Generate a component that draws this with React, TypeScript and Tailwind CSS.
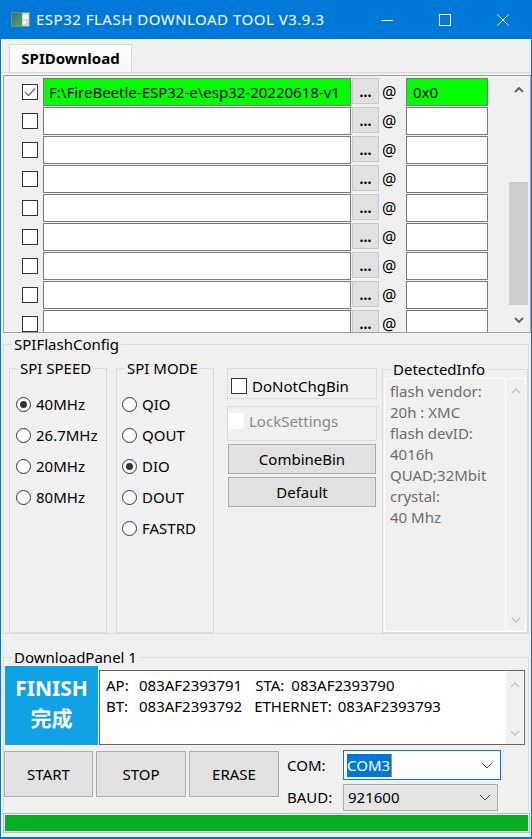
import React from "react";

type ChevronProps = { up?: boolean; color: string; w?: number; h?: number; sw?: number };

function Chevron({ up = false, color, w = 10, h = 6, sw = 1.5 }: ChevronProps) {
  const d = up ? `M1 ${h - 1} L${w / 2} 1 L${w - 1} ${h - 1}` : `M1 1 L${w / 2} ${h - 1} L${w - 1} 1`;
  return (
    <svg width={w} height={h} viewBox={`0 0 ${w} ${h}`} fill="none">
      <path d={d} stroke={color} strokeWidth={sw} />
    </svg>
  );
}

function AppIcon() {
  return (
    <svg width="19" height="15" viewBox="0 0 19 15">
      <defs>
        <linearGradient id="ic" x1="0" y1="0" x2="1" y2="1">
          <stop offset="0" stopColor="#2c6f86" />
          <stop offset="1" stopColor="#52ad4f" />
        </linearGradient>
      </defs>
      <rect x="0.5" y="0.5" width="18" height="14" fill="#d3d9d9" stroke="#7d8a8a" />
      <rect x="1" y="1" width="10" height="13" fill="url(#ic)" />
      <rect x="12" y="3" width="5" height="4" fill="#ffffff" />
      <rect x="12" y="9" width="3" height="3" fill="#ffffff" />
    </svg>
  );
}

function TitleBar() {
  return (
    <div className="flex h-[39px] shrink-0 items-center bg-[#0078d7] text-white">
      <div className="ml-[11px] flex">
        <AppIcon />
      </div>
      <span className="ml-[6px] text-[15px] leading-none tracking-[0.5px]">ESP32 FLASH DOWNLOAD TOOL V3.9.3</span>
      <div className="ml-auto flex h-full">
        <div className="flex w-[58px] items-center justify-center">
          <svg width="12" height="12" viewBox="0 0 12 12">
            <path d="M0 6.5 H12" stroke="#fff" strokeWidth="1" />
          </svg>
        </div>
        <div className="flex w-[58px] items-center justify-center">
          <svg width="12" height="12" viewBox="0 0 12 12">
            <rect x="0.5" y="0.5" width="11" height="11" fill="none" stroke="#fff" strokeWidth="1" />
          </svg>
        </div>
        <div className="flex w-[58px] items-center justify-center">
          <svg width="12" height="12" viewBox="0 0 12 12">
            <path d="M0.5 0.5 L11.5 11.5 M11.5 0.5 L0.5 11.5" stroke="#fff" strokeWidth="1" />
          </svg>
        </div>
      </div>
    </div>
  );
}

function Check({ checked = false, faded = false }: { checked?: boolean; faded?: boolean }) {
  return (
    <span
      className={
        faded
          ? "flex h-[16px] w-[16px] shrink-0 items-center justify-center bg-white"
          : "flex h-[16px] w-[16px] shrink-0 items-center justify-center border border-[#333333] bg-white"
      }
    >
      {checked && (
        <svg width="12" height="10" viewBox="0 0 12 10" fill="none">
          <path d="M1 5 L4.5 8.5 L11 1.5" stroke="#6d6d6d" strokeWidth="1.3" />
        </svg>
      )}
    </span>
  );
}

function Radio({ label, checked = false }: { label: string; checked?: boolean }) {
  return (
    <div className="flex h-[31px] items-center gap-[5px]">
      <span className="flex h-[15px] w-[15px] shrink-0 items-center justify-center rounded-full border border-[#333333] bg-white">
        {checked && <span className="h-[7px] w-[7px] rounded-full bg-[#333333]" />}
      </span>
      <span>{label}</span>
    </div>
  );
}

function Legend({ children }: { children: React.ReactNode }) {
  return <legend className="ml-[8px] px-[2px] text-[15px] leading-[18px]">{children}</legend>;
}

function FileTable() {
  const rows = Array.from({ length: 9 }, (_, i) => i);
  return (
    <div className="-mr-[2px] mt-[2px] flex h-[258px] shrink-0 border border-[#a0a0a0]">
      <div className="flex flex-1 flex-col overflow-hidden pt-[2px]">
        {rows.map((i) => (
          <div key={i} className="mb-px flex h-[28px] shrink-0 items-center">
            <div className="ml-[18px]">
              <Check checked={i === 0} />
            </div>
            <div
              className={
                i === 0
                  ? "ml-[5px] flex h-full w-[308px] items-center overflow-hidden whitespace-nowrap border border-[#7a7a7a] bg-[#00ff00] pl-[5px]"
                  : "ml-[5px] h-full w-[308px] border border-[#7a7a7a] bg-white"
              }
            >
              {i === 0 ? "F:\\FireBeetle-ESP32-e\\esp32-20220618-v1" : ""}
            </div>
            <div className="ml-px flex h-[26px] w-[27px] shrink-0 items-end justify-center self-start border border-[#c8c8c8] bg-[#e1e1e1] pb-[4px] text-[14px] font-bold leading-[14px]">
              ...
            </div>
            <span className="ml-[3px] w-[14px] text-[16px] leading-[15px]">@</span>
            <div
              className={
                i === 0
                  ? "ml-[10px] flex h-full w-[82px] items-center border border-[#7a7a7a] bg-[#00ff00] pl-[6px]"
                  : "ml-[10px] h-full w-[82px] border border-[#7a7a7a] bg-white"
              }
            >
              {i === 0 ? "0x0" : ""}
            </div>
          </div>
        ))}
      </div>
      <div className="mr-px flex w-[21px] shrink-0 flex-col">
        <div className="flex h-[27px] items-center justify-center">
          <Chevron up color="#606060" w={10} h={6} sw={1.8} />
        </div>
        <div className="flex-1 px-px">
          <div className="mt-[79px] h-[123px] bg-[#cdcdcd]" />
        </div>
        <div className="flex h-[25px] items-center justify-center">
          <Chevron color="#606060" w={10} h={6} sw={1.8} />
        </div>
      </div>
    </div>
  );
}

function FlashConfig() {
  const info = ["flash vendor:", "20h : XMC", "flash devID:", "4016h", "QUAD;32Mbit", "crystal:", "40 Mhz"];
  return (
    <fieldset className="mt-[2px] min-w-0 border border-[#dcdcdc]">
      <Legend>SPIFlashConfig</Legend>
      <div className="mt-[6px] flex h-[274px] pl-[5px]">
        <fieldset className="w-[98px] min-w-0 border border-[#dcdcdc]">
          <Legend>SPI SPEED</Legend>
          <div className="pl-[6px] pt-[12px]">
            <Radio label="40MHz" checked />
            <Radio label="26.7MHz" />
            <Radio label="20MHz" />
            <Radio label="80MHz" />
          </div>
        </fieldset>
        <fieldset className="ml-[9px] w-[98px] min-w-0 border border-[#dcdcdc]">
          <Legend>SPI MODE</Legend>
          <div className="pl-[5px] pt-[12px]">
            <Radio label="QIO" />
            <Radio label="QOUT" />
            <Radio label="DIO" checked />
            <Radio label="DOUT" />
            <Radio label="FASTRD" />
          </div>
        </fieldset>
        <div className="ml-[13px] flex w-[150px] flex-col pt-[9px]">
          <div className="flex h-[31px] items-start gap-[5px] border border-[#dcdcdc] pl-[3px] pt-[9px]">
            <Check />
            <span className="leading-[16px]">DoNotChgBin</span>
          </div>
          <div className="mt-[7px] flex h-[35px] items-start gap-[5px] border border-[#dcdcdc] pt-[6px]">
            <Check faded />
            <span className="leading-[16px] text-[#8a8a8a]">LockSettings</span>
          </div>
          <div className="mx-px mt-[3px] flex h-[30px] items-center justify-center border border-[#adadad] bg-[#e1e1e1]">
            CombineBin
          </div>
          <div className="mx-px mt-[3px] flex h-[30px] items-center justify-center border border-[#adadad] bg-[#e1e1e1]">
            Default
          </div>
        </div>
        <fieldset className="ml-[5px] mt-[1px] min-w-0 flex-1 border border-[#dcdcdc]">
          <Legend>DetectedInfo</Legend>
          <div className="mx-px flex h-[254px] border border-white">
            <div className="flex-1 pl-[5px] pt-[2px] leading-[21px] text-[#6d6d6d]">
              {info.map((t) => (
                <div key={t}>{t}</div>
              ))}
            </div>
            <div className="flex w-[20px] flex-col justify-between border-l border-white">
              <div className="flex h-[24px] items-center justify-center">
                <Chevron up color="#c4c4c4" w={10} h={6} sw={1.5} />
              </div>
              <div className="flex h-[22px] items-center justify-center">
                <Chevron color="#c4c4c4" w={10} h={6} sw={1.5} />
              </div>
            </div>
          </div>
        </fieldset>
      </div>
    </fieldset>
  );
}

function DownloadPanel() {
  return (
    <>
      <fieldset className="mt-[14px] min-w-0 border border-b-0 border-[#dcdcdc]">
        <Legend>DownloadPanel 1</Legend>
        <div className="flex h-[79px] items-end">
          <div className="ml-px flex h-full w-[93px] flex-col items-center bg-[#0fa3e6] pt-[9px] font-bold text-white">
            <span className="text-[21px] leading-[26px]">FINISH</span>
            <span className="mt-[2px] text-[21px] leading-[30px]">完成</span>
          </div>
          <div className="ml-px flex h-[75px] w-[426px] border border-[#646464] bg-white">
            <div className="flex-1 pl-[6px] pt-[4px] leading-[21px]">
              <div className="flex">
                <span className="w-[33px]">AP:</span>
                <span>083AF2393791</span>
                <span className="ml-[13px]">STA:</span>
                <span className="ml-[7px]">083AF2393790</span>
              </div>
              <div className="flex">
                <span className="w-[33px]">BT:</span>
                <span>083AF2393792</span>
                <span className="ml-[12px]">ETHERNET:</span>
                <span className="ml-[6px]">083AF2393793</span>
              </div>
            </div>
            <div className="mr-px flex w-[17px] flex-col justify-between bg-[#f0f0f0]">
              <div className="flex h-[28px] items-center justify-center">
                <Chevron up color="#c4c4c4" w={10} h={6} sw={1.5} />
              </div>
              <div className="flex h-[22px] items-center justify-center">
                <Chevron color="#c4c4c4" w={10} h={6} sw={1.5} />
              </div>
            </div>
          </div>
        </div>
        <div className="mt-[5px] flex items-start">
          <div className="mt-px flex h-[46px] w-[89px] items-center justify-center border border-[#adadad] bg-[#e1e1e1]">
            START
          </div>
          <div className="ml-[3px] mt-px flex h-[46px] w-[90px] items-center justify-center border border-[#adadad] bg-[#e1e1e1]">
            STOP
          </div>
          <div className="ml-[3px] mt-px flex h-[46px] w-[90px] items-center justify-center border border-[#adadad] bg-[#e1e1e1]">
            ERASE
          </div>
          <div className="ml-[8px] grid grid-cols-[56px_158px] items-center gap-y-[4px]">
            <span>COM:</span>
            <div className="flex h-[30px] items-center border border-[#0078d7] bg-white pl-[3px] pr-[7px]">
              <span className="flex h-[23px] items-center bg-[#0078d7] pr-px text-white">COM3</span>
              <span className="h-[23px] w-px bg-[#e0803a]" />
              <span className="ml-auto flex">
                <Chevron color="#444444" w={12} h={7} sw={1} />
              </span>
            </div>
            <span>BAUD:</span>
            <div className="flex h-[27px] w-[155px] items-center border border-[#acacac] bg-[#e5e5e5] pl-[4px] pr-[6px]">
              <span>921600</span>
              <span className="ml-auto flex">
                <Chevron color="#444444" w={12} h={7} sw={1} />
              </span>
            </div>
          </div>
        </div>
      </fieldset>
      <div className="-mr-px mt-[2px] h-[20px] border border-[#bcbcbc] p-px">
        <div className="h-full bg-[#06b025]" />
      </div>
    </>
  );
}

export default function App() {
  return (
    <div className="flex h-[839px] w-[532px] flex-col overflow-hidden bg-[#0078d7] font-['Noto_Sans','Noto_Sans_CJK_SC',sans-serif] text-[15px] text-black">
      <TitleBar />
      <div className="mx-px mb-[2px] flex flex-1 flex-col bg-[#f0f0f0]">
        <div className="flex h-[34px] shrink-0 items-end border-b border-[#d9d9d9] pl-[8px]">
          <div className="flex h-[28px] w-[123px] items-center justify-center border border-b-0 border-[#d9d9d9] bg-linear-to-b from-white to-[#f7f7f7] font-bold">
            SPIDownload
          </div>
        </div>
        <div className="flex flex-col px-[2px]">
          <FileTable />
          <FlashConfig />
          <DownloadPanel />
        </div>
      </div>
    </div>
  );
}
